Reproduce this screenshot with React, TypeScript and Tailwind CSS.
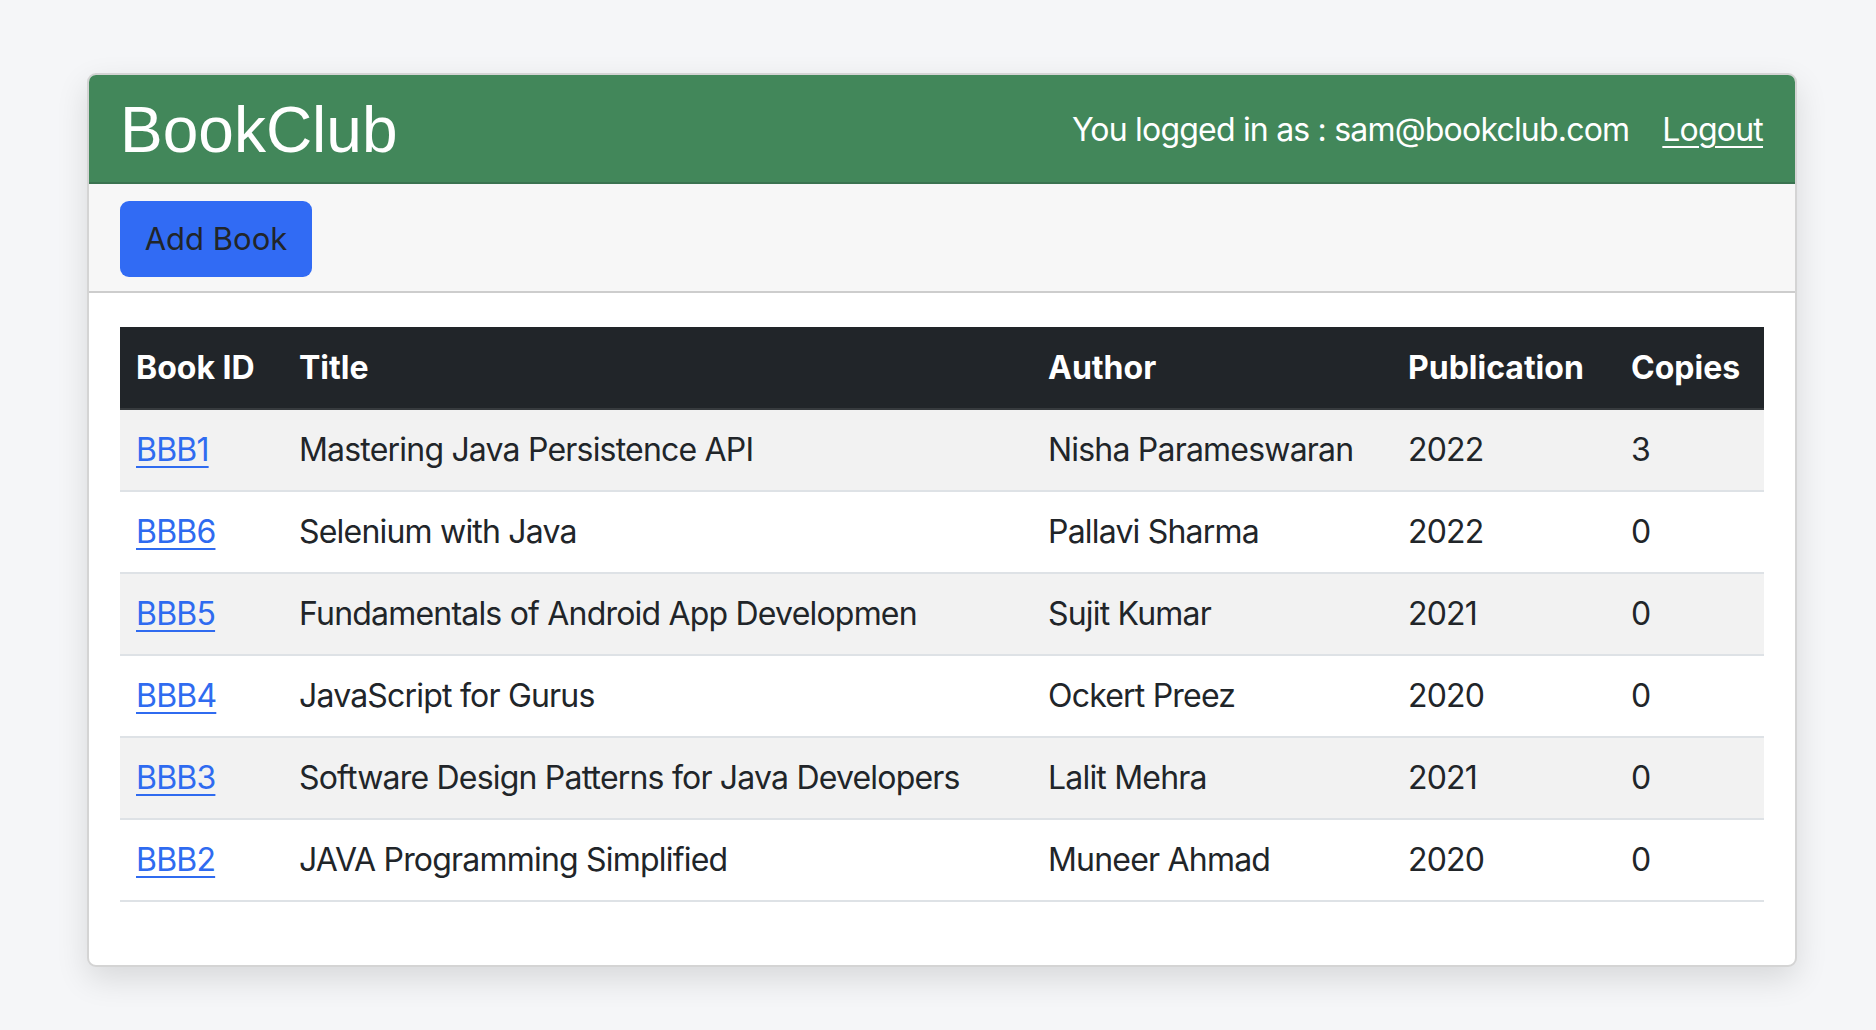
import React from 'react';

type Book = {
  id: string;
  title: string;
  author: string;
  publication: number;
  copies: number;
};

const books: Book[] = [
  { id: 'BBB1', title: 'Mastering Java Persistence API', author: 'Nisha Parameswaran', publication: 2022, copies: 3 },
  { id: 'BBB6', title: 'Selenium with Java', author: 'Pallavi Sharma', publication: 2022, copies: 0 },
  { id: 'BBB5', title: 'Fundamentals of Android App Developmen', author: 'Sujit Kumar', publication: 2021, copies: 0 },
  { id: 'BBB4', title: 'JavaScript for Gurus', author: 'Ockert Preez', publication: 2020, copies: 0 },
  { id: 'BBB3', title: 'Software Design Patterns for Java Developers', author: 'Lalit Mehra', publication: 2021, copies: 0 },
  { id: 'BBB2', title: 'JAVA Programming Simplified', author: 'Muneer Ahmad', publication: 2020, copies: 0 },
];

export default function App() {
  return (
    <div className="min-h-screen bg-[#f5f6f8] pt-[73px] pb-[65px] font-['Inter','Noto_Sans',sans-serif] text-[#212529]">
      <div className="ml-[87px] w-[1710px] rounded-[9px] border-2 border-[#d4d4d4] bg-white shadow-[0_12px_32px_rgba(0,0,0,0.12)] overflow-hidden">
        {/* header */}
        <div className="flex h-[109px] items-center justify-between border-b-2 border-[#3a7350] bg-[#42875a] pl-[31px] pr-[32px] pt-[2px]">
          <h1 className="font-['Liberation_Sans','Arial',sans-serif] text-[64px] leading-none text-white">BookClub</h1>
          <div className="flex items-center gap-[33px] text-[32px] tracking-[-0.8px] text-white">
            <span>You logged in as : sam@bookclub.com</span>
            <a href="#" className="underline underline-offset-[5px] decoration-2">
              Logout
            </a>
          </div>
        </div>

        {/* toolbar */}
        <div className="border-b-2 border-[#cdcdcd] bg-[#f7f7f7] pl-[31px] pt-[17px] pb-[14px]">
          <button className="flex h-[76px] w-[192px] items-center justify-center rounded-[9px] bg-[#316bf4] text-[31px] text-[#212529]">
            Add Book
          </button>
        </div>

        {/* table */}
        <div className="px-[31px] pt-[34px] pb-[63px]">
          <table className="w-full table-fixed border-collapse text-[32px]">
            <colgroup>
              <col className="w-[163px]" />
              <col className="w-[749px]" />
              <col className="w-[360px]" />
              <col className="w-[223px]" />
              <col className="w-[149px]" />
            </colgroup>
            <thead className="bg-[#212529] text-white">
              <tr className="h-[82px] border-b-2 border-[#373b3e]">
                <th className="px-4 text-left font-bold">Book ID</th>
                <th className="px-4 text-left font-bold">Title</th>
                <th className="px-4 text-left font-bold">Author</th>
                <th className="px-4 text-left font-bold">Publication</th>
                <th className="px-4 text-left font-bold">Copies</th>
              </tr>
            </thead>
            <tbody className="tracking-[-0.8px]">
              {books.map((b, i) => (
                <tr
                  key={b.id}
                  className={`h-[82px] border-b-2 border-[#dee2e6] ${i % 2 === 0 ? 'bg-[#f2f2f2]' : 'bg-white'}`}
                >
                  <td className="px-4">
                    <a href="#" className="text-[#2f6bf0] underline underline-offset-[5px] decoration-2">
                      {b.id}
                    </a>
                  </td>
                  <td className="px-4 whitespace-nowrap">{b.title}</td>
                  <td className="px-4 whitespace-nowrap">{b.author}</td>
                  <td className="px-4">{b.publication}</td>
                  <td className="px-4">{b.copies}</td>
                </tr>
              ))}
            </tbody>
          </table>
        </div>
      </div>
    </div>
  );
}
